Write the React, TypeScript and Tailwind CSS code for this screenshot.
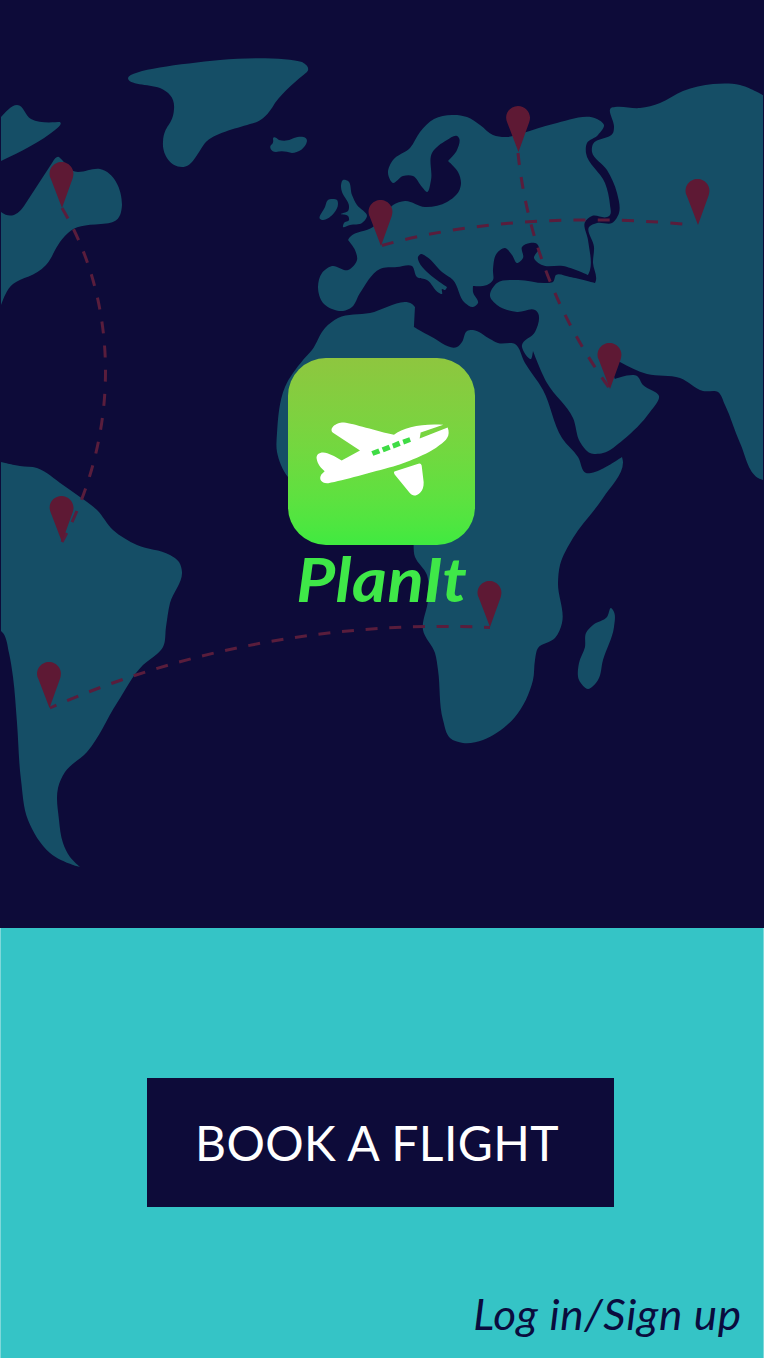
type Point = [number, number];

// Smooth closed outline through the given coastline points.
// A point listed twice in a row is a sharp corner.
function coast(flat: number[]): string {
  const p: Point[] = [];
  for (let i = 0; i < flat.length; i += 2) p.push([flat[i], flat[i + 1]]);
  const n = p.length;
  const tangent = (i: number): Point => {
    const a = p[(i + n - 1) % n];
    const b = p[i % n];
    const c = p[(i + 1) % n];
    const da = Math.hypot(b[0] - a[0], b[1] - a[1]);
    const db = Math.hypot(c[0] - b[0], c[1] - b[1]);
    if (da === 0 || db === 0) return [0, 0];
    const wa = Math.sqrt(db);
    const wb = Math.sqrt(da);
    const s = wa + wb;
    return [
      (((b[0] - a[0]) / da) * wa + ((c[0] - b[0]) / db) * wb) / s,
      (((b[1] - a[1]) / da) * wa + ((c[1] - b[1]) / db) * wb) / s,
    ];
  };
  let d = `M${p[0][0]} ${p[0][1]}`;
  for (let i = 0; i < n; i++) {
    const b = p[i];
    const c = p[(i + 1) % n];
    const k = Math.hypot(c[0] - b[0], c[1] - b[1]) * 0.33;
    const t = tangent(i);
    const u = tangent((i + 1) % n);
    d += `C${(b[0] + t[0] * k).toFixed(1)} ${(b[1] + t[1] * k).toFixed(1)} ${(c[0] - u[0] * k).toFixed(1)} ${(c[1] - u[1] * k).toFixed(1)} ${c[0]} ${c[1]}`;
  }
  return d + "Z";
}

const drawnLand = [
  // Baffin
  "M1 117C6 112 11 105 17 105C24 105 25 116 31 119C40 124 55 122 60 122Q63 124 55 130C42 141 20 152 1 161Z",
  // Labrador
  "M1 212C10 219 18 215 24 206L52 163Q57 154 60 158C66 163 69 172 78 172C86 172 92 168 100 169C114 172 122 189 122 205C121 220 116 223 101 224C85 225 75 226 68 233C55 245 54 256 46 265C35 277 22 277 13 284C6 290 4 298 1 305Z",
  // Greenland
  "M128 78C130 70 180 64 220 60C250 57 290 58 302 62Q311 67 307 72C297 80 284 91 275 103C267 117 260 122 250 124C235 129 214 133 205 143C195 157 192 167 182 167C170 167 162 154 163 142C164 124 173 126 174 109C175 98 169 92 160 88C148 84 128 85 128 78Z",
  // Iceland
  "M273 139C273 136 276 137 279 140Q287 142 294 138C300 136 307 136 307 141C306 148 298 153 292 153Q283 150 276 152C271 152 269 147 271 145Q274 143 273 139Z",
];

const europe = [
  318, 287, 322, 273, 332, 266, 348, 270, 357, 260, 355, 250, 348, 240, 348, 240, 350, 237, 373, 227, 385, 215,
  393, 205, 405, 201, 425, 207, 447, 202, 459, 191, 461, 183, 458, 172, 448, 161, 448, 161, 457, 150, 459, 138,
  457, 136, 447, 140, 432, 153, 431, 180, 427, 192, 422, 187, 413, 176, 403, 176, 393, 183, 388, 173, 393, 160,
  410, 148, 420, 132, 434, 119, 452, 115, 467, 117, 480, 125, 493, 135, 507, 137, 523, 133, 553, 124, 597, 119,
  604, 125, 598, 135, 587, 143, 586, 153, 605, 183, 610, 205, 610, 215, 607, 217, 592, 216, 585, 222, 588, 240,
  590, 270, 588, 275, 588, 275, 563, 266, 542, 265, 534, 258, 539, 248, 537, 244, 530, 243, 522, 247, 523, 258,
  517, 263, 512, 255, 505, 248, 497, 253, 493, 270, 493, 280, 487, 285, 473, 286, 473, 286, 473, 292, 478, 303,
  473, 307, 465, 303, 453, 280, 442, 272, 427, 257, 421, 254, 418, 257, 419, 262, 427, 272, 447, 287, 447, 287,
  445, 290, 442, 289, 442, 294, 439, 293, 427, 280, 417, 277, 412, 266, 397, 267, 380, 269, 360, 293, 352, 307,
  343, 311, 332, 309, 323, 303,
];
const britain = [
  341, 187, 343, 180, 348, 181, 352, 195, 357, 205, 367, 216, 362, 223, 350, 225, 343, 227, 344, 223, 349, 220,
  348, 216, 341, 214, 348, 211, 349, 206, 342, 192,
];
const ireland = [320, 219, 325, 207, 328, 200, 332, 199, 337, 200, 338, 204, 334, 213, 323, 220];
const asia = [
  611, 108, 615, 107, 640, 108, 660, 103, 683, 91, 713, 84, 740, 85, 763, 95, 763, 95, 763, 480, 763, 480, 758,
  478, 740, 443, 725, 405, 718, 392, 703, 391, 680, 378, 647, 374, 620, 362, 605, 352, 605, 352, 615, 379, 615,
  379, 637, 376, 643, 385, 659, 396, 650, 412, 623, 440, 603, 453, 590, 453, 580, 442, 573, 418, 547, 383, 533,
  351, 533, 351, 531, 359, 522, 347, 522, 345, 535, 332, 538, 313, 535, 310, 517, 312, 497, 305, 490, 296, 497,
  283, 517, 280, 547, 283, 553, 282, 556, 275, 570, 277, 595, 283, 595, 283, 596, 280, 593, 263, 594, 247, 589,
  227, 597, 223, 612, 223, 619, 213, 617, 193, 607, 170, 592, 152, 593, 144, 613, 133, 614, 127,
];
const africa = [
  312, 350, 325, 328, 338, 318, 370, 313, 412, 304, 415, 307, 415, 307, 414, 327, 414, 327, 430, 336, 457, 347,
  462, 342, 467, 331, 473, 330, 490, 339, 498, 343, 515, 344, 525, 363, 543, 390, 562, 438, 578, 457, 586, 473,
  591, 473, 600, 470, 622, 457, 622, 457, 623, 462, 603, 498, 573, 538, 560, 565, 558, 583, 562, 623, 555, 638,
  538, 648, 535, 660, 533, 680, 515, 717, 483, 740, 463, 743, 450, 738, 443, 720, 438, 670, 435, 653, 423, 630,
  428, 600, 427, 575, 415, 557, 412, 535, 330, 500, 288, 477, 277, 452, 277, 433, 285, 387, 303, 360,
];
const madagascar = [
  611, 608, 614, 612, 614, 627, 603, 660, 598, 680, 588, 689, 579, 680, 579, 663, 585, 647, 586, 633, 593, 625,
  607, 617,
];
const southAmerica = [
  1, 462, 1, 462, 20, 466, 37, 468, 63, 485, 80, 497, 97, 510, 113, 530, 137, 545, 170, 555, 179, 562, 182, 572,
  170, 603, 166, 627, 163, 647, 157, 654, 143, 665, 117, 703, 87, 752, 65, 772, 58, 788, 59, 820, 63, 843, 70,
  857, 80, 867, 80, 867, 73, 865, 50, 853, 28, 820, 21, 780, 17, 723, 13, 677, 9, 653, 3, 633, 1, 631, 1, 631,
];
const outlines = [europe, britain, ireland, asia, africa, madagascar, southAmerica];

const routes = [
  { d: "M62 208C120 305 120 435 62 542", dash: "12 12.2", offset: 0 },
  { d: "M382 245.500C480 217.500 600 215.500 692 225", dash: "12 12.2", offset: 0 },
  { d: "M518 153C527 240 560 320 610 389", dash: "12 12.2", offset: 0 },
  { d: "M490 627.500C345 620.500 190 646 50 708", dash: "12 11.7", offset: 6 },
];

const pins: Point[] = [
  [62, 208],
  [381, 246],
  [518.5, 152],
  [698, 225],
  [610, 389],
  [62, 542],
  [49.5, 708],
  [490, 627],
];

function WorldMap() {
  return (
    <svg className="absolute inset-0" width="764" height="928" viewBox="0 0 764 928" aria-hidden="true">
      <g fill="#154e66">
        {drawnLand.map((d) => (
          <path key={d} d={d} />
        ))}
        {outlines.map((o, i) => (
          <path key={i} d={coast(o)} />
        ))}
      </g>
      <g fill="none" stroke="#591d3c" strokeWidth="3">
        {routes.map((r) => (
          <path key={r.d} d={r.d} strokeDasharray={r.dash} strokeDashoffset={r.offset} />
        ))}
      </g>
      <g fill="#5e1934">
        {pins.map(([x, y]) => (
          <path
            key={`${x}-${y}`}
            transform={`translate(${x} ${y})`}
            d="M0 0L-11.3 -29.5C-15 -38 -8.500 -46 -.5 -46C7.500 -46 14 -38 10.600 -29.500Z"
          />
        ))}
      </g>
    </svg>
  );
}

function AppIcon() {
  return (
    <div className="flex h-[187px] w-[187px] shrink-0 rounded-[38px] bg-linear-to-b from-[#8ec63f] to-[#3fea40]">
      <svg width="187" height="187" viewBox="288 357.500 187 187" aria-hidden="true">
        <g transform="translate(300 400) scale(.33333)">
          <path
            fill="#fff"
            d="M50 175C47 158 65 152 82 158Q106 166 125 180L180 150L99 97C85 84 108 65 132 66C160 69 230 92 282 103C310 80 370 68 430 73L362 96L359 114L443 81C452 105 440 120 418 134C395 155 330 182 280 198C215 215 130 240 85 248C65 250 55 236 64 222L74 212C64 205 52 190 50 175Z"
          />
          <path
            fill="#fff"
            d="M283 213L355 190Q363 187 365 195L371 245C372 272 355 285 342 285Q335 284 330 278L284 222Q280 216 283 213Z"
          />
          <path
            fill="#3fdc45"
            d="M214 152L235 144L241 158L220 166ZM245 141L266 133L272 147L251 155ZM276 130L296 121L302 136L281 144ZM307 118L328 110L333 124L312 132Z"
          />
        </g>
      </svg>
    </div>
  );
}

export default function App() {
  return (
    <main className="flex h-[1358px] w-[764px] flex-col overflow-hidden bg-[#35c4c6] font-['Lato','Open_Sans',sans-serif]">
      <section className="relative flex h-[928px] shrink-0 flex-col items-center bg-[#0d0b39] pt-[357.500px] pr-px">
        <WorldMap />
        <div className="relative flex flex-col items-center">
          <AppIcon />
          <h1 className="h-[66px] origin-center scale-x-110 text-[61px] leading-[67px] font-bold tracking-[0.5px] whitespace-nowrap text-[#3fe848] italic">
            PlanIt
          </h1>
        </div>
      </section>
      <section className="flex grow flex-col border-x border-[#7fd8da] pt-[150px]">
        <button
          type="button"
          className="ml-[146px] flex h-[129px] w-[467px] items-center justify-center bg-[#0d0b39] pr-[7px] text-[48px] leading-none tracking-[0.4px] whitespace-nowrap text-white"
        >
          BOOK A FLIGHT
        </button>
        <a
          href="#login"
          className="mt-[81px] mr-[21px] origin-right scale-x-105 self-end text-[42px] leading-[52px] tracking-[0.6px] whitespace-nowrap text-[#0a0c3e] italic"
        >
          Log in/Sign up
        </a>
      </section>
    </main>
  );
}
